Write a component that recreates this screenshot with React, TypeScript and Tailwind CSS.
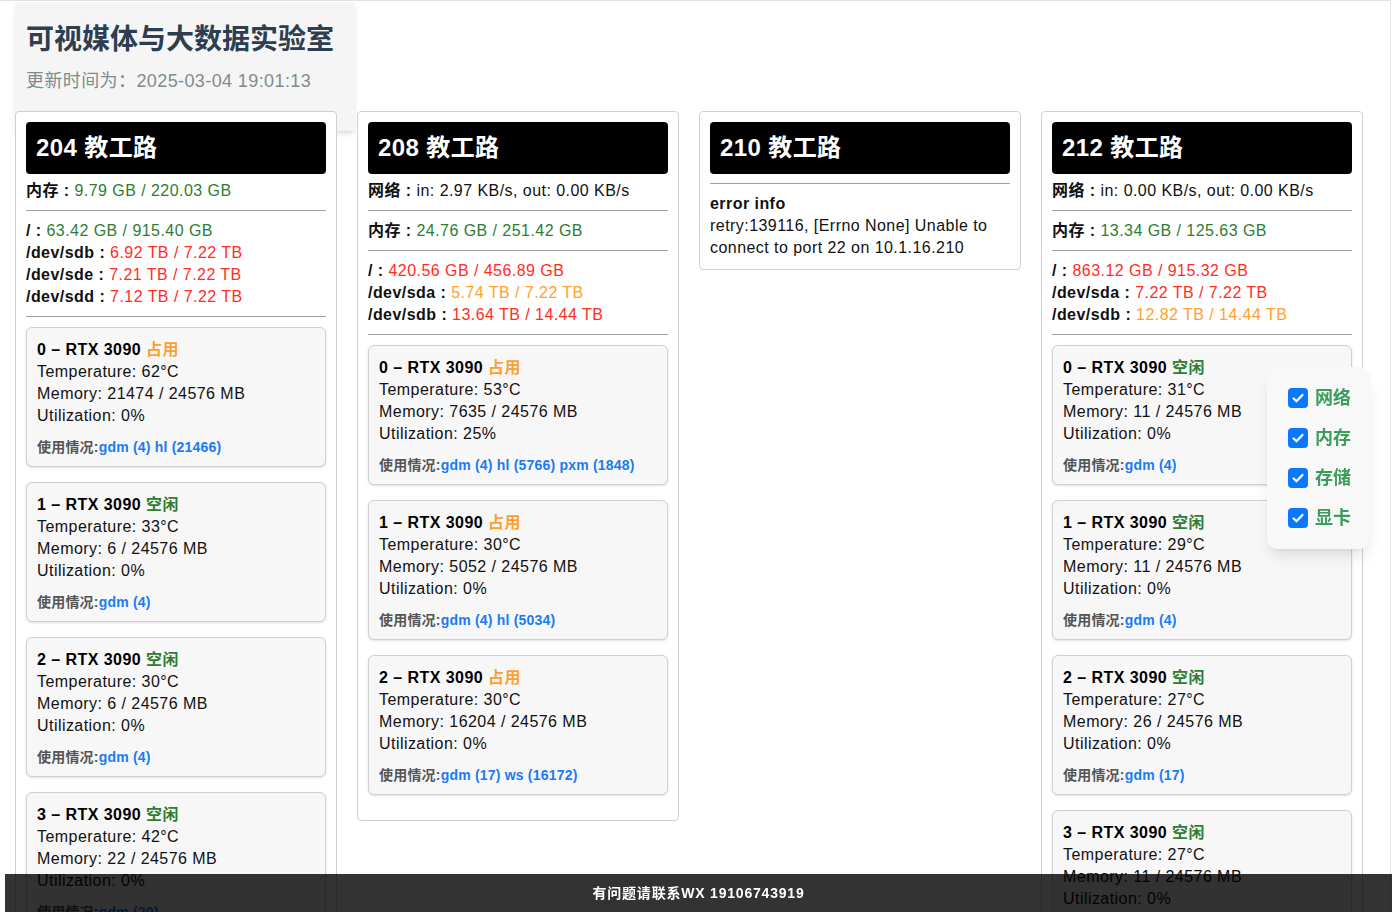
type Level = 'ok' | 'warn' | 'bad';

type Disk = { name: string; used: string; total: string; level: Level };

type Gpu = {
	id: number;
	busy: boolean;
	temp: number;
	mem: number;
	util: number;
	users: string;
};

type Server = {
	name: string;
	net?: string;
	mem?: string;
	memLevel?: Level;
	disks?: Disk[];
	gpus?: Gpu[];
	error?: string;
};

const levelColor: Record<Level, string> = {
	ok: 'text-[#2e7d32]',
	warn: 'text-[#ff9f2e]',
	bad: 'text-[#ff2d1e]',
};

const servers: Server[] = [
	{
		name: '204 教工路',
		mem: '9.79 GB / 220.03 GB',
		memLevel: 'ok',
		disks: [
			{ name: '/', used: '63.42 GB', total: '915.40 GB', level: 'ok' },
			{ name: '/dev/sdb', used: '6.92 TB', total: '7.22 TB', level: 'bad' },
			{ name: '/dev/sde', used: '7.21 TB', total: '7.22 TB', level: 'bad' },
			{ name: '/dev/sdd', used: '7.12 TB', total: '7.22 TB', level: 'bad' },
		],
		gpus: [
			{ id: 0, busy: true, temp: 62, mem: 21474, util: 0, users: 'gdm (4) hl (21466)' },
			{ id: 1, busy: false, temp: 33, mem: 6, util: 0, users: 'gdm (4)' },
			{ id: 2, busy: false, temp: 30, mem: 6, util: 0, users: 'gdm (4)' },
			{ id: 3, busy: false, temp: 42, mem: 22, util: 0, users: 'gdm (20)' },
		],
	},
	{
		name: '208 教工路',
		net: 'in: 2.97 KB/s, out: 0.00 KB/s',
		mem: '24.76 GB / 251.42 GB',
		memLevel: 'ok',
		disks: [
			{ name: '/', used: '420.56 GB', total: '456.89 GB', level: 'bad' },
			{ name: '/dev/sda', used: '5.74 TB', total: '7.22 TB', level: 'warn' },
			{ name: '/dev/sdb', used: '13.64 TB', total: '14.44 TB', level: 'bad' },
		],
		gpus: [
			{ id: 0, busy: true, temp: 53, mem: 7635, util: 25, users: 'gdm (4) hl (5766) pxm (1848)' },
			{ id: 1, busy: true, temp: 30, mem: 5052, util: 0, users: 'gdm (4) hl (5034)' },
			{ id: 2, busy: true, temp: 30, mem: 16204, util: 0, users: 'gdm (17) ws (16172)' },
		],
	},
	{
		name: '210 教工路',
		error: 'retry:139116, [Errno None] Unable to connect to port 22 on 10.1.16.210',
	},
	{
		name: '212 教工路',
		net: 'in: 0.00 KB/s, out: 0.00 KB/s',
		mem: '13.34 GB / 125.63 GB',
		memLevel: 'ok',
		disks: [
			{ name: '/', used: '863.12 GB', total: '915.32 GB', level: 'bad' },
			{ name: '/dev/sda', used: '7.22 TB', total: '7.22 TB', level: 'bad' },
			{ name: '/dev/sdb', used: '12.82 TB', total: '14.44 TB', level: 'warn' },
		],
		gpus: [
			{ id: 0, busy: false, temp: 31, mem: 11, util: 0, users: 'gdm (4)' },
			{ id: 1, busy: false, temp: 29, mem: 11, util: 0, users: 'gdm (4)' },
			{ id: 2, busy: false, temp: 27, mem: 26, util: 0, users: 'gdm (17)' },
			{ id: 3, busy: false, temp: 27, mem: 11, util: 0, users: 'gdm (4)' },
		],
	},
];

const Divider = () => <div className="h-px bg-[#a0a0a0] mt-2 mb-[9px]" />;

const GpuCard = ({ gpu }: { gpu: Gpu }) => (
	<div className="bg-[#f7f7f7] border border-[#d0d0d0] rounded-md pt-[11px] pb-[9px] px-[10px] mb-[15px] shadow-sm">
		<div className="font-bold text-black">
			{gpu.id} – RTX 3090{' '}
			<span className={gpu.busy ? 'text-[#ff9f2e]' : 'text-[#2e7d32]'}>
				{gpu.busy ? '占用' : '空闲'}
			</span>
		</div>
		<div>Temperature: {gpu.temp}°C</div>
		<div>Memory: {gpu.mem} / 24576 MB</div>
		<div>Utilization: {gpu.util}%</div>
		<div className="mt-[10px] text-[14px] leading-5 font-semibold text-[#555] tracking-[0.2px]">
			使用情况:<span className="text-[#1a7bf2]">{gpu.users}</span>
		</div>
	</div>
);

const ServerCard = ({ server }: { server: Server }) => (
	<div className="bg-white border border-[#d0d0d0] rounded p-[10px] text-[16px] leading-[22px] text-[#111] tracking-[0.45px]">
		<div className="bg-black rounded h-[52px] flex items-center px-[10px] text-white text-[24px] font-bold tracking-[0.4px]">
			{server.name}
		</div>
		{server.error ? (
			<>
				<div className="h-px bg-[#a0a0a0] mt-[9px] mb-[9px]" />
				<div className="font-bold">error info</div>
				<div>{server.error}</div>
			</>
		) : (
			<div className="mt-[6px]">
				{server.net && (
					<>
						<div>
							<span className="font-bold">网络 : </span>
							{server.net}
						</div>
						<Divider />
					</>
				)}
				<div>
					<span className="font-bold">内存 : </span>
					<span className={levelColor[server.memLevel ?? 'ok']}>{server.mem}</span>
				</div>
				<Divider />
				{server.disks?.map((d) => (
					<div key={d.name}>
						<span className="font-bold">{d.name} : </span>
						<span className={levelColor[d.level]}>
							{d.used} / {d.total}
						</span>
					</div>
				))}
				<div className="h-px bg-[#a0a0a0] mt-2 mb-[10px]" />
				<div className="flex flex-col">
					{server.gpus?.map((g) => (
						<GpuCard key={g.id} gpu={g} />
					))}
				</div>
			</div>
		)}
	</div>
);

const Check = ({ label }: { label: string }) => (
	<label className="flex items-center gap-[7px] h-[40px]">
		<span className="w-[20px] h-[20px] rounded-[4px] bg-[#0b76fe] flex items-center justify-center">
			<svg viewBox="0 0 16 16" className="w-[14px] h-[14px]">
				<path d="M3 8.5l3.2 3.2L13 4.5" fill="none" stroke="white" strokeWidth="2.6" strokeLinecap="round" strokeLinejoin="round" />
			</svg>
		</span>
		<span className="text-[18px] font-bold text-[#3c9c5c]">{label}</span>
	</label>
);

export default function App() {
	return (
		<div
			className="min-h-[912px] w-[1391px] bg-white border-t border-r border-[#e2e2e2] pb-16"
			style={{ fontFamily: '"Liberation Sans", "Noto Sans CJK SC", sans-serif' }}
		>
			<div className="ml-[15px] mt-px w-[340px] h-[129px] bg-[#f5f5f5] shadow-md px-[11px] pt-[19px]">
				<h1 className="text-[28px] leading-[38px] font-bold text-[#2c3e50]">可视媒体与大数据实验室</h1>
				<div className="mt-[9px] text-[18px] leading-[26px] text-[#7f8c8d] tracking-[0.4px]">更新时间为：2025-03-04 19:01:13</div>
			</div>

			<div className="relative -mt-[20px] ml-[15px] grid grid-cols-[322px_322px_322px_322px] gap-[20px] items-start">
				{servers.map((s) => (
					<ServerCard key={s.name} server={s} />
				))}
			</div>

			<div className="fixed left-[1267px] top-[367px] w-[103px] h-[182px] bg-[#f8f8f8] rounded-[10px] shadow-lg pl-[21px] pt-[11px]">
				<Check label="网络" />
				<Check label="内存" />
				<Check label="存储" />
				<Check label="显卡" />
			</div>

			<div className="fixed left-[5px] right-0 bottom-0 h-[38px] bg-[rgba(0,0,0,0.8)] flex items-center justify-center text-white text-[14px] font-semibold tracking-[0.8px]">
				有问题请联系WX 19106743919
			</div>
		</div>
	);
}
